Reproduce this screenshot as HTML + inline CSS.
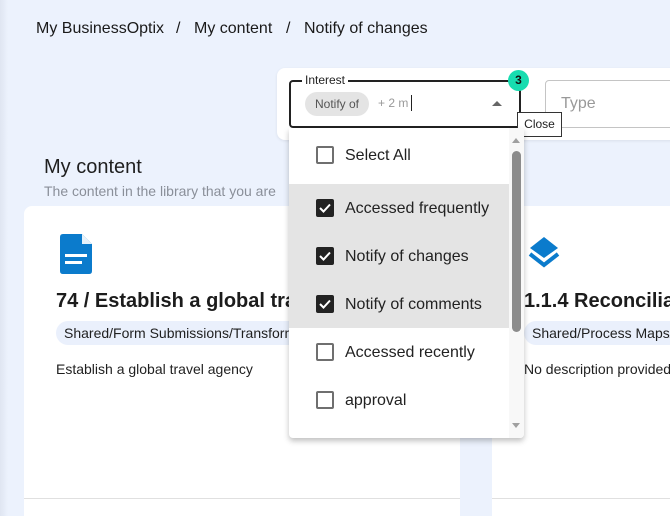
<!DOCTYPE html>
<html style="width:670px;height:516px;overflow:hidden"><head><style>
*{box-sizing:border-box;margin:0;padding:0}
body{width:670px;height:516px;overflow:hidden;background:#ecf2fd;font-family:"Liberation Sans",sans-serif;position:relative;color:#1f1f1f}
.abs{position:absolute}
.bc{top:20px;font-size:16px;color:#1a1a1a;white-space:nowrap}
.card{background:#fff;border-radius:8px 8px 0 0;top:206px;height:310px}
.tag{background:#eaf0fc;border-radius:12px;font-size:14px;padding:4px 8px;height:24px;white-space:nowrap}
.row{position:absolute;left:0;width:220px;height:48px;font-size:16px;color:#222}
.row .cb{position:absolute;left:27px;top:15px;width:18px;height:18px;border:2px solid #6f6f6f;border-radius:2px}
.row .cb.on{background:#222;border-color:#222}
.row span{position:absolute;left:56px;top:16px}
</style></head><body>
<div class="abs" style="left:0;top:0;width:8px;height:516px;background:linear-gradient(90deg,#dfe5f1,#ecf2fd)"></div>
<div class="abs bc" style="left:36px">My BusinessOptix</div>
<div class="abs bc" style="left:176px">/</div>
<div class="abs bc" style="left:194px">My content</div>
<div class="abs bc" style="left:286px">/</div>
<div class="abs bc" style="left:304px">Notify of changes</div>

<div class="abs" style="left:44px;top:156px;font-size:20px;color:#1f1f1f">My content</div>
<div class="abs" style="left:44px;top:183px;font-size:14px;color:#8a8f99;white-space:nowrap">The content in the library that you are</div>

<div class="abs card" style="left:24px;width:436px;overflow:hidden">
  <svg class="abs" style="left:36px;top:28px" width="32" height="40" viewBox="0 0 32 40"><path d="M3 0H22L32 10V37Q32 40 29 40H3Q0 40 0 37V3Q0 0 3 0Z" fill="#0b7bcc"/><path d="M22 0V10H32Z" fill="#fff" opacity=".9"/><rect x="5" y="20" width="22" height="3" fill="#fff"/><rect x="5" y="27" width="17" height="3" fill="#fff"/></svg>
  <div class="abs" style="left:32px;top:84px;font-size:20px;font-weight:bold;white-space:nowrap;color:#1c1c1c">74 / Establish a global travel agency</div>
  <div class="abs tag" style="left:32px;top:115px">Shared/Form Submissions/Transformation</div>
  <div class="abs" style="left:32px;top:155px;font-size:14px;white-space:nowrap">Establish a global travel agency</div>
  <div class="abs" style="left:0;top:292px;width:436px;height:1px;background:#e0e0e0"></div>
</div>
<div class="abs card" style="left:492px;width:200px;overflow:hidden">
  <svg class="abs" style="left:36px;top:31px" width="32" height="32" viewBox="0 0 32 32"><path d="M16 0L30 11L16 21L2 11Z" fill="#0b7bcc"/><path d="M2 17L16 28L30 17" fill="none" stroke="#0b7bcc" stroke-width="4"/></svg>
  <div class="abs" style="left:32px;top:84px;font-size:20px;font-weight:bold;white-space:nowrap;color:#1c1c1c">1.1.4 Reconciliation</div>
  <div class="abs tag" style="left:32px;top:115px">Shared/Process Maps/Finance</div>
  <div class="abs" style="left:32px;top:155px;font-size:14px;white-space:nowrap">No description provided</div>
  <div class="abs" style="left:0;top:292px;width:200px;height:1px;background:#e0e0e0"></div>
</div>

<div class="abs" style="left:277px;top:68px;width:420px;height:72px;background:#fff;border-radius:8px;box-shadow:0 1px 3px rgba(0,0,0,.08)"></div>
<div class="abs" style="left:289px;top:80px;width:232px;height:48px;border:2px solid #222;border-radius:4px"></div>
<div class="abs" style="left:302px;top:73px;background:#fff;padding:0 3px;font-size:12px;color:#222">Interest</div>
<div class="abs" style="left:305px;top:92px;width:64px;height:24px;background:#e4e4e4;border-radius:12px;font-size:12px;color:#555;padding:5px 0 0 10px;overflow:hidden;white-space:nowrap">Notify of</div>
<div class="abs" style="left:378px;top:96px;font-size:12px;color:#999">+ 2 m</div>
<div class="abs" style="left:411px;top:95px;width:1px;height:16px;background:#222"></div>
<div class="abs" style="left:492px;top:101px;width:0;height:0;border-left:5px solid transparent;border-right:5px solid transparent;border-bottom:5px solid #666"></div>
<div class="abs" style="left:545px;top:80px;width:140px;height:48px;border:1px solid #c4c4c4;border-radius:4px"></div>
<div class="abs" style="left:561px;top:95px;font-size:16px;color:#999">Type</div>
<div class="abs" style="left:508px;top:70px;width:21px;height:21px;border-radius:50%;background:#17dcb0;font-size:12px;font-weight:bold;text-align:center;line-height:21px;color:#111">3</div>
<div class="abs" style="left:517px;top:112px;width:45px;height:25px;background:#fff;border:1px solid #333;font-size:12px;text-align:center;line-height:23px;color:#222">Close</div>

<div class="abs" style="left:289px;top:128px;width:235px;height:310px;background:#fff;border-radius:0 0 4px 4px;box-shadow:0 3px 6px rgba(0,0,0,.25);overflow:hidden">
  <div class="abs" style="left:0;top:56px;width:220px;height:144px;background:#e4e4e4"></div>
  <div class="row" style="top:3px"><div class="cb"></div><span>Select All</span></div>
  <div class="row" style="top:56px"><div class="cb on"><svg width="14" height="14" viewBox="0 0 14 14" style="position:absolute;left:0;top:0"><path d="M2 7L5.5 10.5L12 3.5" fill="none" stroke="#fff" stroke-width="2"/></svg></div><span>Accessed frequently</span></div>
  <div class="row" style="top:104px"><div class="cb on"><svg width="14" height="14" viewBox="0 0 14 14" style="position:absolute;left:0;top:0"><path d="M2 7L5.5 10.5L12 3.5" fill="none" stroke="#fff" stroke-width="2"/></svg></div><span>Notify of changes</span></div>
  <div class="row" style="top:152px"><div class="cb on"><svg width="14" height="14" viewBox="0 0 14 14" style="position:absolute;left:0;top:0"><path d="M2 7L5.5 10.5L12 3.5" fill="none" stroke="#fff" stroke-width="2"/></svg></div><span>Notify of comments</span></div>
  <div class="row" style="top:200px"><div class="cb"></div><span>Accessed recently</span></div>
  <div class="row" style="top:248px"><div class="cb"></div><span>approval</span></div>
  <div class="abs" style="left:220px;top:0;width:15px;height:310px;background:#f8f8f8"></div>
  <div class="abs" style="left:223px;top:10px;width:0;height:0;border-left:4px solid transparent;border-right:4px solid transparent;border-bottom:5px solid #a0a0a0"></div>
  <div class="abs" style="left:223px;top:23px;width:9px;height:181px;background:#8c8c8c;border-radius:5px"></div>
  <div class="abs" style="left:223px;top:295px;width:0;height:0;border-left:4px solid transparent;border-right:4px solid transparent;border-top:5px solid #a0a0a0"></div>
</div>
</body></html>
